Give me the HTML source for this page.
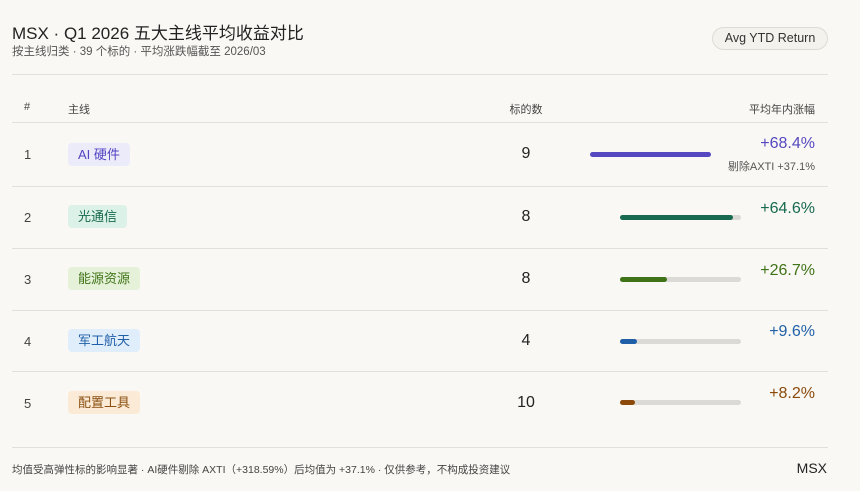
<!DOCTYPE html>
<html><head><meta charset="utf-8"><style>
*{margin:0;padding:0;box-sizing:border-box}
body{width:860px;height:491px;background:#f9f8f4;font-family:"Liberation Sans","Noto Sans CJK SC",sans-serif;color:#222;position:relative;overflow:hidden}
.a{position:absolute;white-space:nowrap}
.ln{position:absolute;left:12px;width:816px;height:1px;background:#e2e0db}
.tag{position:absolute;left:68px;height:23px;line-height:23px;padding:0 10px;border-radius:4px;font-size:13px}
.num{position:absolute;left:24px;font-size:13px;color:#444}
.cnt{position:absolute;left:490px;width:72px;text-align:center;font-size:16px;color:#222}
.trk{position:absolute;left:620px;width:121px;height:5px;border-radius:3px;background:#dcdad6}
.trk i{position:absolute;left:0;top:0;height:5px;border-radius:3px}
.pct{position:absolute;right:45px;font-size:16px}
</style></head><body>
<div class="a" style="left:12px;top:19px;font-size:17px;color:#222">MSX · Q1 2026 五大主线平均收益对比</div>
<div class="a" style="left:12px;top:43px;font-size:11.5px;color:#555">按主线归类 · 39 个标的 · 平均涨跌幅截至 2026/03</div>
<div class="a" style="left:712px;top:27px;width:116px;height:23px;border:1px solid #dddbd3;border-radius:12px;background:#f3f2ec;font-size:12.5px;line-height:21px;text-align:center;color:#333">Avg YTD Return</div>
<div class="ln" style="top:74px"></div>
<div class="a" style="left:24px;top:101px;font-size:11px;color:#444">#</div>
<div class="a" style="left:68px;top:101px;font-size:11px;color:#444">主线</div>
<div class="a" style="left:490px;width:72px;text-align:center;top:101px;font-size:11px;color:#444">标的数</div>
<div class="a" style="right:45px;top:101px;font-size:11px;color:#444">平均年内涨幅</div>
<div class="ln" style="top:122px"></div>

<div class="num" style="top:147px">1</div>
<div class="tag" style="top:143px;background:#ecebfa;color:#5346c2">AI 硬件</div>
<div class="cnt" style="top:145px">9</div>
<div class="trk" style="left:590px;top:152px;background:none"><i style="width:121px;background:#5548c0"></i></div>
<div class="pct" style="top:135px;color:#5548c0">+68.4%</div>
<div class="a" style="right:45px;top:158px;font-size:11px;color:#555">剔除AXTI +37.1%</div>
<div class="ln" style="top:186px"></div>

<div class="num" style="top:210px">2</div>
<div class="tag" style="top:205px;background:#dcf1e7;color:#17694f">光通信</div>
<div class="cnt" style="top:208px">8</div>
<div class="trk" style="top:215px"><i style="width:113px;background:#17694f"></i></div>
<div class="pct" style="top:200px;color:#17694f">+64.6%</div>
<div class="ln" style="top:248px"></div>

<div class="num" style="top:272px">3</div>
<div class="tag" style="top:267px;background:#e5f1d8;color:#3f7317">能源资源</div>
<div class="cnt" style="top:270px">8</div>
<div class="trk" style="top:277px"><i style="width:47px;background:#3f7317"></i></div>
<div class="pct" style="top:262px;color:#3f7317">+26.7%</div>
<div class="ln" style="top:310px"></div>

<div class="num" style="top:334px">4</div>
<div class="tag" style="top:329px;background:#e0edfa;color:#1f5fa8">军工航天</div>
<div class="cnt" style="top:332px">4</div>
<div class="trk" style="top:339px"><i style="width:17px;background:#1f5fa8"></i></div>
<div class="pct" style="top:323px;color:#1f5fa8">+9.6%</div>
<div class="ln" style="top:371px"></div>

<div class="num" style="top:396px">5</div>
<div class="tag" style="top:391px;background:#fbebd6;color:#8b4f10">配置工具</div>
<div class="cnt" style="top:394px">10</div>
<div class="trk" style="top:400px"><i style="width:15px;background:#8b4a0a"></i></div>
<div class="pct" style="top:385px;color:#8b4a0a">+8.2%</div>

<div class="ln" style="top:447px"></div>
<div class="a" style="left:12px;top:462px;font-size:10.5px;color:#444">均值受高弹性标的影响显著 · AI硬件剔除 AXTI（+318.59%）后均值为 +37.1% · 仅供参考，不构成投资建议</div>
<div class="a" style="right:33px;top:460px;font-size:14px;color:#222">MSX</div>
</body></html>
